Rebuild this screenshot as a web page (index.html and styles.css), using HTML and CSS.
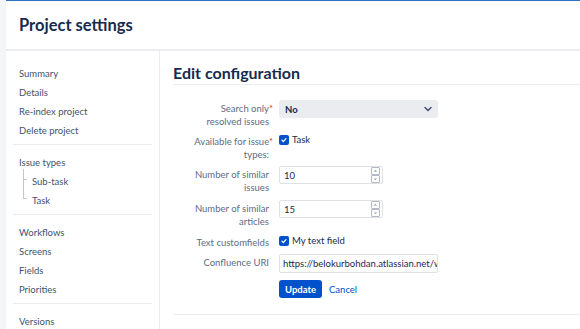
FILE: index.html
```html
<!DOCTYPE html>
<html lang="en">
  <head>
    <meta charset="UTF-8" />
    <meta name="viewport" content="width=device-width, initial-scale=1.0" />
    <title>Project settings</title>
    <link rel="stylesheet" href="styles.css">
  </head>
  <body>
    <div class="shell">
      <div class="rail"></div>
      <div class="content">
        <header class="page-header">
          <h1>Project settings</h1>
        </header>
        <div class="page-body">
          <nav class="sidebar">
            <ul class="nav-group">
              <li><a href="#">Summary</a></li>
              <li><a href="#">Details</a></li>
              <li><a href="#">Re-index project</a></li>
              <li><a href="#">Delete project</a></li>
            </ul>
            <ul class="nav-group">
              <li><a href="#">Issue types</a></li>
              <li class="sub"><a href="#">Sub-task</a></li>
              <li class="sub last"><a href="#">Task</a></li>
            </ul>
            <ul class="nav-group">
              <li><a href="#">Workflows</a></li>
              <li><a href="#">Screens</a></li>
              <li><a href="#">Fields</a></li>
              <li><a href="#">Priorities</a></li>
            </ul>
            <ul class="nav-group">
              <li><a href="#">Versions</a></li>
            </ul>
          </nav>
          <main class="main">
            <h2>Edit configuration</h2>
            <form class="config-form">
              <div class="field-row">
                <label class="field-label">Search only<span class="req">*</span><br>resolved issues</label>
                <div class="select">
                  <span>No</span>
                  <svg width="10" height="10" viewBox="0 0 10 10"><path d="M2 3.5 L5 6.5 L8 3.5" fill="none" stroke="#42526e" stroke-width="1.5" stroke-linecap="round" stroke-linejoin="round"/></svg>
                </div>
              </div>
              <div class="field-row">
                <label class="field-label">Available for issue<span class="req">*</span><br>types:</label>
                <label class="check"><span class="box"><svg width="8" height="8" viewBox="0 0 8 8"><path d="M2 4.2 L3.4 5.5 L6 2.6" fill="none" stroke="#fff" stroke-width="1.2" stroke-linecap="round" stroke-linejoin="round"/></svg></span>Task</label>
              </div>
              <div class="field-row num-row">
                <label class="field-label">Number of similar<br>issues</label>
                <div class="number">
                  <span>10</span>
                  <span class="spin"><i>&#708;</i><i>&#709;</i></span>
                </div>
              </div>
              <div class="field-row num-row">
                <label class="field-label">Number of similar<br>articles</label>
                <div class="number">
                  <span>15</span>
                  <span class="spin"><i>&#708;</i><i>&#709;</i></span>
                </div>
              </div>
              <div class="field-row">
                <label class="field-label">Text customfields</label>
                <label class="check"><span class="box"><svg width="8" height="8" viewBox="0 0 8 8"><path d="M2 4.2 L3.4 5.5 L6 2.6" fill="none" stroke="#fff" stroke-width="1.2" stroke-linecap="round" stroke-linejoin="round"/></svg></span>My text field</label>
              </div>
              <div class="field-row">
                <label class="field-label">Confluence URI</label>
                <div class="text-input">https://belokurbohdan.atlassian.net/wiki</div>
              </div>
              <div class="field-row actions-row">
                <span></span>
                <div class="actions">
                  <button type="button" class="btn-primary">Update</button>
                  <a href="#" class="cancel">Cancel</a>
                </div>
              </div>
            </form>
            <hr class="divider">
          </main>
        </div>
      </div>
    </div>
  </body>
</html>
```

FILE: styles.css
```css
/* Page layout */
body {
  margin: 0;
  font-family: Lato, "Open Sans", sans-serif;
  color: #172b4d;
  background: #fff;
}

.shell {
  display: flex;
  height: 329px;
  overflow: hidden;
}

.rail {
  width: 6px;
  background: #f4f5f7;
  flex-shrink: 0;
}

.content {
  flex: 1;
  border-top: 1px solid #2f6fc4;
}

.page-header {
  height: 48px;
  border-bottom: 2px solid #ebecf0;
  display: flex;
  align-items: center;
  padding-left: 13px;
}

.page-header h1 {
  margin: 0;
  font-size: 16.5px;
  font-weight: 700;
  color: #172b4d;
}

.page-body {
  display: flex;
}

/* Sidebar */
.sidebar {
  width: 139px;
  padding: 10px 7px 0;
  border-right: 1px solid #ebecf0;
}

.nav-group {
  list-style: none;
  margin: 0 0 5px;
  padding: 0 0 7px;
  border-bottom: 1px solid #ebecf0;
}

.nav-group li {
  height: 19px;
  line-height: 19px;
  padding-left: 6px;
  position: relative;
}

.nav-group a {
  font-size: 9.5px;
  color: #42526e;
  text-decoration: none;
}

.nav-group li.sub {
  padding-left: 19px;
}

.nav-group li.sub::before {
  content: "";
  position: absolute;
  left: 10px;
  top: 0;
  height: 10px;
  border-left: 1px solid #c1c7d0;
}

.nav-group li.sub::after {
  content: "";
  position: absolute;
  left: 10px;
  top: 10px;
  width: 4px;
  border-top: 1px solid #c1c7d0;
}

.nav-group li.sub:not(.last)::before {
  height: 19px;
}

/* Main */
.main {
  flex: 1;
  padding: 12px 0 0 13px;
}

.main h2 {
  margin: 0 0 15px;
  padding-bottom: 2px;
  font-size: 16px;
  font-weight: 700;
  border-bottom: 1px solid #ebecf0;
}

.field-row {
  display: grid;
  grid-template-columns: 96px 1fr;
  column-gap: 10px;
  align-items: start;
  margin-bottom: 5px;
}

.field-row.num-row {
  margin-bottom: 6px;
}

.field-row.actions-row {
  margin-top: 7px;
}

.field-label {
  text-align: right;
  font-size: 9.5px;
  line-height: 13px;
  color: #5e6c84;
  padding-top: 2px;
}

.req {
  color: #de350b;
  margin-right: -4px;
}

.select {
  width: 159px;
  height: 18px;
  box-sizing: border-box;
  background: #ebecf0;
  border-radius: 3px;
  display: flex;
  align-items: center;
  justify-content: space-between;
  padding: 0 5px 0 6px;
  font-size: 9.5px;
  font-weight: 700;
}

.check {
  display: flex;
  align-items: center;
  font-size: 9.5px;
  line-height: 13px;
  color: #172b4d;
}

.box {
  width: 10px;
  height: 10px;
  margin-right: 3px;
  background: #0052cc;
  border-radius: 2px;
  display: flex;
  align-items: center;
  justify-content: center;
}

.number {
  width: 104px;
  height: 18px;
  box-sizing: border-box;
  border: 1px solid #dfe1e6;
  border-radius: 2px;
  display: flex;
  align-items: center;
  justify-content: space-between;
  padding: 0 2px 0 4px;
  font-size: 9.5px;
}

.spin {
  display: flex;
  flex-direction: column;
}

.spin i {
  font-style: normal;
  width: 7px;
  height: 6px;
  border: 1px solid #b3bac5;
  border-radius: 1px;
  font-size: 6px;
  line-height: 8px;
  text-align: center;
  color: #42526e;
  overflow: hidden;
}

.text-input {
  width: 159px;
  height: 19px;
  box-sizing: border-box;
  border: 1px solid #dfe1e6;
  border-radius: 2px;
  padding: 0 3px;
  font-size: 9.5px;
  line-height: 17px;
  white-space: nowrap;
  overflow: hidden;
}

.actions {
  display: flex;
  align-items: center;
  gap: 7px;
}

.btn-primary {
  height: 18px;
  padding: 0 6px;
  border: none;
  border-radius: 3px;
  background: #0052cc;
  color: #fff;
  font-family: inherit;
  font-size: 9.5px;
  font-weight: 700;
}

.cancel {
  font-size: 9.5px;
  color: #0052cc;
  text-decoration: none;
}

.divider {
  margin: 16px 0 0;
  border: none;
  border-top: 1px solid #ebecf0;
}
```
